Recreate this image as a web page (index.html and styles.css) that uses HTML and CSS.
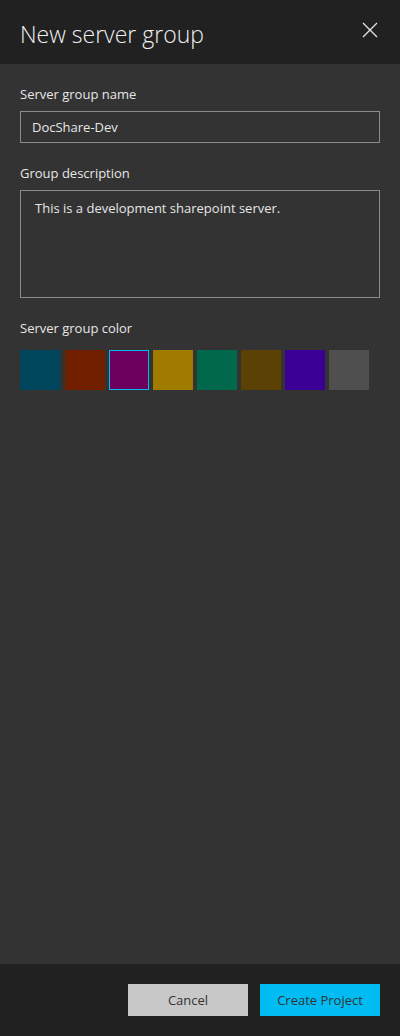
FILE: index.html
```html
<!DOCTYPE html>
<html>
<head>
<meta charset="utf-8">
<link rel="stylesheet" href="styles.css">
</head>
<body>
<div class="panel">
  <header class="header">
    <h1 class="title">New server group</h1>
    <button class="close" aria-label="Close">
      <svg width="16" height="16" viewBox="0 0 16 16"><path d="M1 1 L15 15 M15 1 L1 15" stroke="#e6e6e6" stroke-width="1.3" fill="none"/></svg>
    </button>
  </header>
  <main class="body">
    <div class="field">
      <label class="label">Server group name</label>
      <div class="input">DocShare-Dev</div>
    </div>
    <div class="field">
      <label class="label">Group description</label>
      <div class="textarea">This is a development sharepoint server.</div>
    </div>
    <div class="field">
      <label class="label">Server group color</label>
      <div class="swatches">
        <div class="swatch c1"></div>
        <div class="swatch c2"></div>
        <div class="swatch c3 selected"></div>
        <div class="swatch c4"></div>
        <div class="swatch c5"></div>
        <div class="swatch c6"></div>
        <div class="swatch c7"></div>
        <div class="swatch c8"></div>
      </div>
    </div>
  </main>
  <footer class="footer">
    <button class="btn cancel">Cancel</button>
    <button class="btn primary">Create Project</button>
  </footer>
</div>
</body>
</html>
```
FILE: styles.css
```css
html, body {
  margin: 0;
  padding: 0;
}
body {
  font-family: "Open Sans", "Noto Sans", sans-serif;
  background: #333333;
  color: #e6e6e6;
}
.panel {
  width: 400px;
  height: 1036px;
  display: flex;
  flex-direction: column;
}
.header {
  height: 64px;
  flex: 0 0 64px;
  background: #212121;
  display: flex;
  align-items: center;
  justify-content: space-between;
  padding: 0 22px 0 20px;
  box-sizing: border-box;
}
.title {
  margin: 0;
  font-size: 23px;
  font-weight: 300;
  color: #f0f0f0;
  letter-spacing: 0;
  padding-top: 4px;
}
.close {
  background: none;
  border: none;
  padding: 0;
  width: 16px;
  height: 16px;
  display: flex;
  margin-top: -4px;
}
.body {
  flex: 1;
  background: #333333;
  padding: 21px 20px 0 20px;
}
.field {
  display: flex;
  flex-direction: column;
  margin-bottom: 21px;
}
.label {
  font-size: 13px;
  color: #e6e6e6;
  line-height: 18px;
  margin-bottom: 8px;
}
.input {
  height: 32px;
  box-sizing: border-box;
  border: 1px solid #8c8c8c;
  font-size: 13px;
  line-height: 30px;
  padding: 0 11px;
  color: #e6e6e6;
}
.textarea {
  height: 108px;
  box-sizing: border-box;
  border: 1px solid #8c8c8c;
  font-size: 13px;
  line-height: 18px;
  padding: 8px 14px;
  color: #e6e6e6;
}
.swatches {
  display: flex;
  gap: 4px;
  margin-top: 5px;
}
.swatch {
  width: 40px;
  height: 40px;
  box-sizing: border-box;
}
.swatch:first-child {
  margin-right: 1px;
}
.swatch.selected {
  border: 1px solid #00bcf2;
}
.c1 { background: #00465c; }
.c2 { background: #721f00; }
.c3 { background: #6c005e; }
.c4 { background: #a07b00; }
.c5 { background: #00694b; }
.c6 { background: #5c4104; }
.c7 { background: #3a0096; }
.c8 { background: #4f4f4f; }
.footer {
  height: 72px;
  flex: 0 0 72px;
  background: #212121;
  display: flex;
  justify-content: flex-end;
  align-items: center;
  gap: 12px;
  padding: 0 20px;
  box-sizing: border-box;
}
.btn {
  width: 120px;
  height: 32px;
  border: none;
  font-family: "Open Sans", "Noto Sans", sans-serif;
  font-size: 13px;
  color: #333333;
  padding: 0;
}
.cancel { background: #c8c8c8; }
.primary { background: #00bcf2; }
```
